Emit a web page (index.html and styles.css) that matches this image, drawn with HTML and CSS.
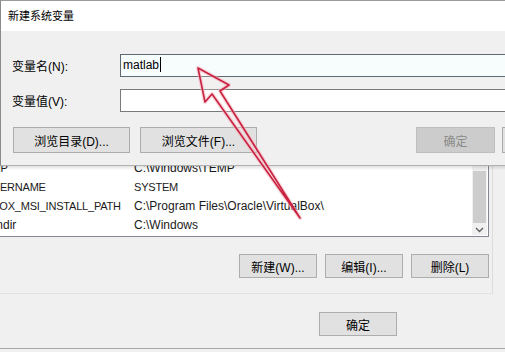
FILE: index.html
```html
<!DOCTYPE html>
<html lang="zh-CN">

<head>
    <title>新建系统变量</title>
    <link rel="stylesheet" href="styles.css">
</head>

<body>
    <div class="screen">
        <!-- Environment variables window behind the dialog -->
        <div class="env-window">
            <div class="group">
                <div class="var-list">
                    <div class="var-rows">
                        <div class="var-row"><span class="var-name caps">TEMP</span><span>C:\Windows\TEMP</span></div>
                        <div class="var-row"><span class="var-name caps">TMP</span><span>C:\Windows\TEMP</span></div>
                        <div class="var-row"><span class="var-name caps">USERNAME</span><span class="caps">SYSTEM</span></div>
                        <div class="var-row"><span class="var-name caps">VBOX_MSI_INSTALL_PATH</span><span>C:\Program Files\Oracle\VirtualBox\</span></div>
                        <div class="var-row"><span class="var-name">windir</span><span>C:\Windows</span></div>
                    </div>
                    <div class="scrollbar">
                        <div class="scroll-thumb"></div>
                        <svg class="scroll-arrow" width="9" height="6" viewBox="0 0 9 6">
                            <path d="M1 1 L4.5 4.5 L8 1" fill="none" stroke="#606060" stroke-width="1.4" />
                        </svg>
                    </div>
                </div>
                <div class="list-actions">
                    <button class="win-btn">新建(W)...</button>
                    <button class="win-btn">编辑(I)...</button>
                    <button class="win-btn">删除(L)</button>
                </div>
            </div>
            <div class="window-actions">
                <button class="win-btn">确定</button>
            </div>
        </div>

        <!-- New system variable dialog -->
        <div class="dialog">
            <div class="dialog-title">新建系统变量</div>
            <div class="dialog-body">
                <div class="field-row">
                    <label>变量名(N):</label>
                    <div class="text-input focused">matlab<span class="caret"></span></div>
                </div>
                <div class="field-row">
                    <label>变量值(V):</label>
                    <div class="text-input"></div>
                </div>
                <div class="dialog-actions">
                    <button class="win-btn wide">浏览目录(D)...</button>
                    <button class="win-btn wide">浏览文件(F)...</button>
                    <div class="spacer"></div>
                    <button class="win-btn" disabled>确定</button>
                    <button class="win-btn cancel">取消</button>
                </div>
            </div>
        </div>

        <!-- Red arrow annotation -->
        <svg class="annotation" width="505" height="352" viewBox="0 0 505 352">
            <polygon points="198,68 229,85 220,91 300,218 212,94 205,102" fill="rgba(255,240,242,0.35)"
                stroke="#f4b6c1" stroke-width="4" stroke-linejoin="round" opacity="0.6" />
            <polygon points="198,68 229,85 220,91 300,218 212,94 205,102" fill="none"
                stroke="#c92240" stroke-width="1.6" stroke-linejoin="round" />
        </svg>
    </div>
</body>

</html>
```

FILE: styles.css
```css
body {
    margin: 0;
    padding: 0;
    font-family: "Liberation Sans", "Noto Sans CJK SC", sans-serif;
    font-size: 12px;
    color: #000;
    background-color: #f0f0f0;
}

.screen {
    position: relative;
    width: 505px;
    height: 352px;
    overflow: hidden;
}

/* back window */

.env-window {
    width: 527px;
    margin-left: -22px;
    padding-top: 139px;
    background-color: #f0f0f0;
    border-bottom: 1px solid #a8a8a8;
}

.group {
    width: 511px;
    padding: 0 3px 15px 0;
    border-right: 1px solid #dcdcdc;
    border-bottom: 1px solid #e2e2e2;
}

.var-list {
    display: flex;
    height: 96px;
    background: white;
    border: 1px solid #828790;
    overflow: hidden;
}

.var-rows {
    flex: 1;
}

.var-row {
    display: flex;
    height: 19px;
    line-height: 19px;
    padding-left: 6px;
    color: #1a1a1a;
    white-space: nowrap;
}

.var-name {
    width: 149px;
    overflow: hidden;
}

/* upper-case names run narrower in the system font */
.caps {
    font-size: 11px;
    letter-spacing: -0.2px;
}

.scrollbar {
    position: relative;
    width: 15px;
    margin: 1px 1px 1px 0;
    background-color: #f0f0f0;
}

.scroll-thumb {
    margin: 30px 1px 0 1px;
    height: 52px;
    background-color: #cdcdcd;
}

.scroll-arrow {
    display: block;
    margin: 4px auto 0 auto;
}

.list-actions {
    display: flex;
    justify-content: flex-end;
    gap: 8px;
    margin-top: 17px;
}

.list-actions .win-btn {
    width: 78px;
}

.window-actions {
    display: flex;
    padding: 18px 0 12px 341px;
}

.window-actions .win-btn {
    width: 78px;
}

.win-btn {
    height: 24px;
    padding: 0;
    font-family: inherit;
    font-size: 12px;
    color: #000;
    background-color: #e1e1e1;
    border: 1px solid #adadad;
}

.win-btn:disabled {
    color: #8a8a8a;
    background-color: #cccccc;
    border-color: #bfbfbf;
}

/* dialog */

.dialog {
    position: absolute;
    top: 0;
    left: 0;
    width: 591px;
    border-top: 1px solid #9a9a9a;
    border-left: 1px solid #8a8a8a;
    border-bottom: 1px solid #b0b0b0;
    box-shadow: 0 2px 3px rgba(0, 0, 0, 0.12);
}

.dialog-title {
    height: 30px;
    line-height: 30px;
    padding-left: 7px;
    font-size: 11px;
    background: white;
}

.dialog-body {
    padding: 23px 11px 12px 11px;
    background-color: #f0f0f0;
}

.field-row {
    display: flex;
    align-items: center;
    margin-bottom: 12px;
}

.field-row label {
    width: 108px;
}

.text-input {
    flex: 1;
    height: 21px;
    line-height: 21px;
    padding-left: 2px;
    background: white;
    border: 1px solid #7a7a7a;
}

.text-input.focused {
    background: #f7fcfc;
    border-color: #5f6a70;
}

.caret {
    display: inline-block;
    width: 1px;
    height: 15px;
    margin-left: 1px;
    vertical-align: -3px;
    background: #000;
}

.dialog-actions {
    display: flex;
    gap: 10px;
    margin-top: 15px;
}

.dialog-actions .win-btn {
    width: 79px;
    height: 26px;
}

.dialog-actions .wide {
    width: 117px;
}

.dialog-actions .win-btn:first-child {
    margin-left: 1px;
}

.dialog-actions .cancel {
    margin-left: -3px;
}

.spacer {
    flex-grow: 1;
}

.annotation {
    position: absolute;
    top: 0;
    left: 0;
    pointer-events: none;
}
```
